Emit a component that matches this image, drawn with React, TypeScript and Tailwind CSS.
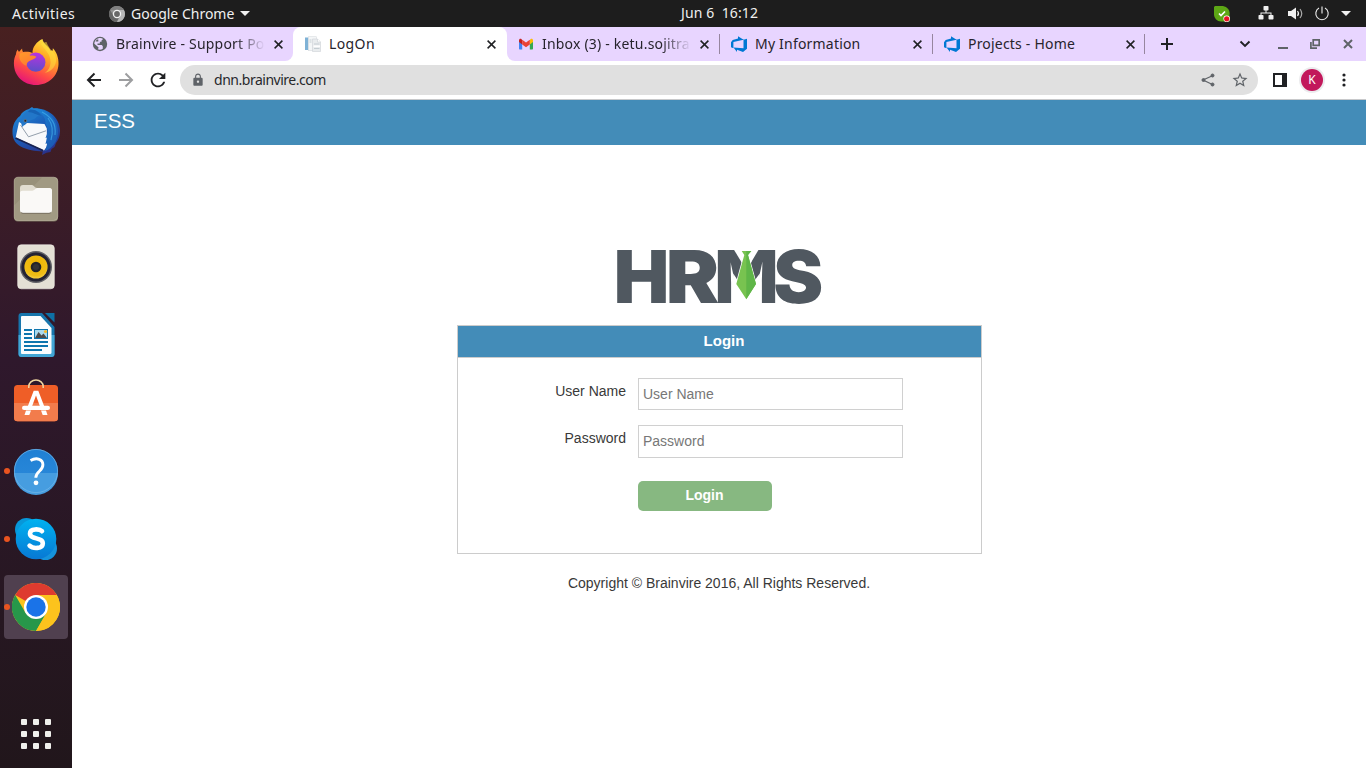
import type { ReactNode } from "react";
import { MdRefresh, MdLock, MdStarBorder } from "react-icons/md";

const Firefox = () => (
  <svg viewBox="0 0 48 48" className="size-12">
    <defs>
      <linearGradient id="ff1" x1="0.8" y1="0" x2="0.3" y2="1">
        <stop offset="0" stopColor="#fff044" />
        <stop offset="0.35" stopColor="#ffa726" />
        <stop offset="0.7" stopColor="#ff4b45" />
        <stop offset="1" stopColor="#e3127c" />
      </linearGradient>
      <linearGradient id="ff2" x1="0.5" y1="0" x2="0.4" y2="1">
        <stop offset="0" stopColor="#b833e1" />
        <stop offset="1" stopColor="#5b4fc8" />
      </linearGradient>
      <linearGradient id="ff3" x1="0" y1="0" x2="0.6" y2="1">
        <stop offset="0" stopColor="#ff9a2a" />
        <stop offset="1" stopColor="#ff7a30" />
      </linearGradient>
    </defs>
    <path d="M30.500 0c.6 4 3.600 5.500 6.500 9 .8 1 1.300 1.900 1.600 2.700 1-.2 1.700-.1 2.200.1-.2-1.200 0-2 .1-2.600 3.700 4 5.900 9.600 5.600 15.800C46.200 37 36.500 46 24 46S2 37 1.900 24.500c0-3.600.7-6.600 2.100-9.200 0-2 .8-3.800 1.900-4.900.2 1.200.6 1.800 1.200 2.400 1-1.400 2.300-2.600 3-3.400 0 1.600.3 2.700 1.200 3.700C15 12.500 18 13 20.500 14c-.3-5.500 4-11.500 10-14z" fill="url(#ff1)" />
    <circle cx="23.800" cy="23.200" r="9.600" fill="url(#ff2)" />
    <path d="M8 14.500c4-1.300 8 .2 10.500 2.300 1.500-.4 4-.2 5.900.9-1.400 2.300-4.600 3-6.500 4.100-1.800 1-3.500 2.200-3.400 5C9 25 6 19 8 14.500z" fill="url(#ff3)" />
    <path d="M29 5c3.500 6 9.500 9 9.500 18 0 5-2.500 9-6 11 7-1.500 12.500-7 11.500-15-1-6-5-7-7-11-1.400-2-2-4-2.500-5-2 .2-4 1-5.500 2z" fill="#ffe23f" opacity=".55" />
  </svg>
);

const Thunderbird = () => (
  <svg viewBox="0 0 48 48" className="size-12">
    <defs>
      <linearGradient id="tb1" x1="0.1" y1="0" x2="0.7" y2="1">
        <stop offset="0" stopColor="#2390dd" />
        <stop offset="0.5" stopColor="#1a5cb8" />
        <stop offset="1" stopColor="#2b2f88" />
      </linearGradient>
      <linearGradient id="tb2" x1="0" y1="0" x2="1" y2="1">
        <stop offset="0" stopColor="#1d8bdc" />
        <stop offset="1" stopColor="#1b52ad" />
      </linearGradient>
    </defs>
    <path d="M17 2L20 0l1.500 1.200C35 .5 47.500 9.500 48 23c.2 6-1.500 10-4 13l-1.500 4-3 2-1 3-4 .8-4.500 2.200.8-3.500C15 43.500 3 40 .8 29-.5 20 2.500 13 8 9c2-4 5-6 9-7z" fill="url(#tb1)" />
    <path d="M7 15l5.500 3.200L15 16l17.500 1 2.300 4.500.2 18-3 4L3.700 30.500z" fill="#f8f9fb" />
    <path d="M8.500 18l8 11.800 17.500-6" fill="none" stroke="#8794a3" strokeWidth=".9" />
    <path d="M3.500 31l27.500 12.500" stroke="#182351" strokeWidth="1.800" />
    <path d="M17 2.500C29 3 34 10 33.500 17c2.500 4 2.500 7 1.500 10l-1.500 4 1.500-.5-1.500 6.500 1.800-.8-2.300 7.800c7-2.500 12.500-9 13-18C46.500 14 37 3 24 1.500z" fill="url(#tb2)" />
    <path d="M36 11c4.500 6 5.500 13 3 22M30 5c9 5 14.500 11 13 23" fill="none" stroke="#45b2ee" strokeWidth="1.200" opacity=".65" />
    <path d="M10.500 20C8 16 9 7 17 3c6-1 11 2 13 6-5-2-5 2-9 3.500-5 1.500-7 3-10.500 7.500z" fill="#2277c9" />
    <path d="M16 5c5 0 8 3 14 4-3-4-7-7-12-6.500z" fill="#1763b5" />
    <circle cx="13.300" cy="13.800" r="1.300" fill="#1b2433" stroke="#9b8d73" strokeWidth=".5" />
  </svg>
);

const Files = () => (
  <svg viewBox="0 0 48 48" className="size-12">
    <rect x="2" y="2.500" width="44" height="44" rx="4" fill="#79705d" />
    <rect x="2.200" y="2.200" width="43.600" height="43.300" rx="4" fill="#a19a83" stroke="#c9c3ae" strokeWidth=".5" />
    <path d="M2.500 30L30 2.500H6a3.500 3.500 0 00-3.500 3.500z" fill="#8f8872" opacity=".5" />
    <path d="M8 13c0-2 1-3 3-3h9c2 0 2.500 3 5 3h12c2 0 3 1 3 3v10H8z" fill="#e1ddd0" />
    <path d="M8 18c0-1.500 1-2.200 2.500-2.200h9.800c2 0 3-2.800 5-2.800h12.200c1.500 0 2.500 1 2.500 2.500v19.500c0 2-1 3-3 3H11c-2 0-3-1-3-3z" fill="#faf9f7" />
    <path d="M9 37.500c.5.500 1.200.8 2 .8h26c.8 0 1.500-.3 2-.8" fill="none" stroke="#6d6657" strokeWidth=".8" />
  </svg>
);

const Rhythmbox = () => (
  <svg viewBox="0 0 48 48" className="size-12">
    <defs>
      <radialGradient id="rb" cx=".5" cy=".35" r=".8">
        <stop offset="0" stopColor="#f0b400" />
        <stop offset=".65" stopColor="#efbd16" />
        <stop offset="1" stopColor="#ffe37a" />
      </radialGradient>
    </defs>
    <rect x="5.700" y="1.800" width="36.600" height="44" rx="3.500" fill="#e4e0d5" stroke="#f5f3ec" strokeWidth=".6" />
    <circle cx="24" cy="24" r="16" fill="#606066" />
    <circle cx="24" cy="24" r="14.600" fill="#242333" />
    <circle cx="24" cy="24" r="11.600" fill="url(#rb)" />
    <circle cx="24" cy="24" r="5.300" fill="#242428" />
    <circle cx="24" cy="24" r="3" fill="#333336" />
  </svg>
);

const Writer = () => (
  <svg viewBox="0 0 48 48" className="size-12">
    <path d="M9.500 2H30l12.500 14v27a3 3 0 01-3 3h-30a3 3 0 01-3-3V5a3 3 0 013-3z" fill="#1675ac" />
    <path d="M6.500 24h36v19a3 3 0 01-3 3h-30a3 3 0 01-3-3z" fill="#42a6d5" />
    <path d="M33 2h9.500v9.500z" fill="#0e70a5" />
    <path d="M10 5h18.500L39.500 17v24.500a1.500 1.500 0 01-1.500 1.500H10a1 1 0 01-1-1V6a1 1 0 011-1z" fill="#fbfdfe" />
    <path d="M12 19h8M12 23h8M12 27h8M12 31h24M12 35h24M12 39h18" stroke="#0c75ae" strokeWidth="1.900" />
    <rect x="22.500" y="18.500" width="13" height="9" fill="#a9daee" stroke="#0c75ae" />
    <path d="M23 27l3.500-6 3 3.500 2-2 3.500 4.500z" fill="#4b4b4b" />
    <circle cx="33.500" cy="20.500" r="1.600" fill="#f5b829" />
  </svg>
);

const Software = () => (
  <svg viewBox="0 0 48 48" className="size-12">
    <rect x="2" y="6" width="44" height="36.300" rx="3.500" fill="#ef5e27" />
    <path d="M2 24h44v14.800a3.500 3.500 0 01-3.500 3.500h-37A3.500 3.500 0 012 38.800z" fill="#f27c4c" />
    <path d="M16.800 9V7.500a7.200 6.500 0 0114.400 0V9" fill="none" stroke="#f1d8a2" strokeWidth="1.500" />
    <path d="M21.700 11.800h4.600L32.500 28h-4.300L24 16.500 19.800 28h-4.300z" fill="#fff" />
    <path d="M14 31.500h5L17.300 36H12.500zM29 31.500h5l1.500 4.500h-4.800z" fill="#fff" />
    <rect x="10" y="26.800" width="28" height="4.300" rx="2.100" fill="#fff" />
  </svg>
);

const Help = () => (
  <svg viewBox="0 0 48 48" className="size-12">
    <defs>
      <linearGradient id="hp" x1="0" y1="0" x2="0" y2="1"><stop offset="0" stopColor="#2080d4" /><stop offset="1" stopColor="#2d8bdb" /></linearGradient>
    </defs>
    <circle cx="24" cy="24" r="22" fill="url(#hp)" />
    <path d="M2 26a22 22 0 0044 0z" fill="#469de0" />
    <circle cx="24" cy="24" r="21.600" fill="none" stroke="#74b7e8" strokeWidth=".7" />
    <path d="M18.500 13.500c6.500-3.600 12.400-1 12.400 4.200 0 6.500-7.100 6.500-7.100 13" fill="none" stroke="#fff" strokeWidth="2.900" />
    <circle cx="24" cy="35.800" r="2.400" fill="#fff" />
  </svg>
);

const Skype = () => (
  <svg viewBox="0 0 48 48" className="size-12">
    <defs>
      <linearGradient id="sk" x1="0" y1="0" x2="0" y2="1">
        <stop offset="0" stopColor="#00b2f0" />
        <stop offset="1" stopColor="#0878d4" />
      </linearGradient>
    </defs>
    <circle cx="14.500" cy="14.500" r="11.500" fill="#0797d9" />
    <circle cx="33.500" cy="33.500" r="11.500" fill="#1593dc" />
    <circle cx="24" cy="24" r="20.300" fill="url(#sk)" />
    <path d="M30 16.200c-2.300-2.400-12-3-12 2.200 0 6.500 12.800 3.500 12.800 10 0 5.700-10 5.500-13.200 2.200" fill="none" stroke="#fff" strokeWidth="4.600" strokeLinecap="round" />
  </svg>
);

const Chrome = () => (
  <svg viewBox="0 0 48 48" className="size-12">
    <circle cx="24" cy="24" r="24" fill="#fcc31d" />
    <path d="M24 24L3.200 12A24 24 0 0144.800 12z" fill="#de3b2f" />
    <path d="M3.200 12l10.400 18h20.800L24 48A24 24 0 013.200 12z" fill="#27974a" />
    <path d="M34.400 30L24 48a24 24 0 0020.800-36H24z" fill="#fcc31d" />
    <circle cx="24" cy="24" r="12" fill="#fff" />
    <circle cx="24" cy="24" r="9.700" fill="#1a73e8" />
  </svg>
);

const GreyChrome = () => (
  <svg viewBox="0 0 16 16" className="size-4">
    <circle cx="8" cy="8" r="8" fill="#919191" />
    <path d="M1.100 4A8 8 0 0114.900 4H8z" fill="#808080" />
    <path d="M1.100 4l3.500 6 4.900 2L8 16A8 8 0 011.100 4z" fill="#666" />
    <path d="M8 4h6.900A8 8 0 018 16l3.400-6z" fill="#b5b5b5" />
    <circle cx="8" cy="8" r="4.200" fill="#f2f2f2" />
    <circle cx="8" cy="8" r="2.900" fill="#686868" />
  </svg>
);

const Globe = () => (
  <svg viewBox="0 0 16 16" className="size-4">
    <circle cx="8" cy="8" r="7.200" fill="#5f6368" />
    <path d="M6.500 2.300c1.700-.5 3.300-.2 4.600.6L9.500 4.500v1.300H7.800v1.700H5.500V9h4.300l1 1.200v2.500c-1.500 1.200-3.600 1.300-5 .6l.9-1.500L5 10 2.300 7.800c0-2.600 1.800-4.900 4.200-5.500z" fill="#e8d5ff" />
    <path d="M3.500 5.500h2.800V3.600L4.800 3.500zM8 6.800h2.500v1H8z" fill="#5f6368" />
  </svg>
);

const LogOnIcon = () => (
  <svg viewBox="0 0 16 16" className="size-4">
    <rect x="0" y="1.500" width="3.500" height="12.500" fill="#7fb2d6" />
    <rect x="3.500" y=".7" width="8" height="14" fill="#f4f6f7" stroke="#d8dde0" strokeWidth=".6" />
    <path d="M7.500 3h5L15.500 6v9.500h-8z" fill="#e9ecee" stroke="#ccd2d6" strokeWidth=".6" />
    <path d="M12.500 3v3h3" fill="#fff" stroke="#c3cace" strokeWidth=".5" />
    <path d="M9 8h5.500M9 12.500h5.500M4.500 4h2M4.500 6h2" stroke="#c0c9ce" strokeWidth=".9" />
    <path d="M8.500 10.200h6.500" stroke="#fff" strokeWidth="1.500" />
  </svg>
);

const Gmail = () => (
  <svg viewBox="0 0 16 16" className="size-4">
    <path d="M1 4v8.500c0 .6.400 1 1 1h2.200V7z" fill="#4285f4" />
    <path d="M15 4v8.500c0 .6-.4 1-1 1h-2.200V7z" fill="#34a853" />
    <path d="M1 4.200V6l3.200 2.500V4.200L3.400 3C2.300 2.200 1 3 1 4.200z" fill="#c5221f" />
    <path d="M15 4.200V6l-3.200 2.500V4.200l.8-1.200c1.100-.8 2.400 0 2.400 1.200z" fill="#fbbc04" />
    <path d="M4.200 3.700L8 6.600l3.800-2.900v4.700L8 11.300 4.200 8.400z" fill="#ea4335" />
  </svg>
);

const DevOps = () => (
  <svg viewBox="0 0 16 16" className="size-4">
    <path d="M16 2.800v10L12 16l-6-2.200V16l-3.500-4.500 10 .8V3.700zM12.600 3.800L7 .2v2.300L1.700 4.100 0 6.200v5l2.400 1V6z" fill="#0078d4" />
  </svg>
);

const HrmsLogo = () => (
  <svg viewBox="0 0 206 56" className="h-14 w-[206px] overflow-visible" role="img" aria-label="HRMS">
    <g fill="#505860" fontFamily="Inter, 'Liberation Sans', sans-serif" fontWeight="900" fontSize="73">
      <text x="-2.300" y="54" textLength="55.500" lengthAdjust="spacingAndGlyphs">H</text>
      <text x="49.800" y="54" textLength="53.500" lengthAdjust="spacingAndGlyphs">R</text>
      <text x="98.700" y="54" textLength="63.500" lengthAdjust="spacingAndGlyphs">M</text>
      <text x="157.200" y="54" textLength="50" lengthAdjust="spacingAndGlyphs">S</text>
    </g>
    <path d="M117.500 0L126 14l4 5 4.700-5L143 0z" fill="#fff" />
    <path d="M117.200 56V24.500l3.300 5L130 46l10-16.500 3.800-5V56z" fill="#fff" />
    <path d="M125.700 2h9.600l-3.300 4 8 29-9.700 15.300L120.300 35l8-29z" fill="#fff" stroke="#fff" strokeWidth="1.500" />
    <path d="M125.700 2h9.600L132 6l8 29-9.700 15.300L120.300 35l8-29z" fill="#78c350" />
    <path d="M135.300 2h-5v48.300L140 35l-8-29z" fill="#5fb648" />
  </svg>
);

const dockItems: { name: string; icon: ReactNode; running?: boolean; active?: boolean }[] = [
  { name: "Firefox", icon: <Firefox /> },
  { name: "Thunderbird", icon: <Thunderbird /> },
  { name: "Files", icon: <Files /> },
  { name: "Rhythmbox", icon: <Rhythmbox /> },
  { name: "Writer", icon: <Writer /> },
  { name: "Software", icon: <Software /> },
  { name: "Help", icon: <Help />, running: true },
  { name: "Skype", icon: <Skype />, running: true },
  { name: "Chrome", icon: <Chrome />, running: true, active: true },
];

function TopBar() {
  return (
    <header className="grid h-[27px] shrink-0 grid-cols-[681px_1fr_auto] items-center bg-[#1d1d1d] text-[14px] leading-[27px] whitespace-pre text-[#f0f0f0]">
      <div className="flex h-[27px] items-center">
        <span className="w-[97px] pl-3 tracking-[0.5px]">Activities</span>
        <span className="mr-1.5 ml-3"><GreyChrome /></span>
        <span className="w-[104px]">Google Chrome</span>
        <svg viewBox="0 0 10 5" className="ml-[5px] h-[5px] w-2.5"><path d="M0 0h10L5 5z" fill="#f0f0f0" /></svg>
      </div>
      <span className="pb-0.5 leading-[25px] tracking-[0.1px]">Jun 6  16:12</span>
      <div className="flex items-center justify-end pr-[15px]">
        <svg viewBox="0 0 16 16" className="mr-7 size-4">
          <path d="M1 0h8a7.500 7.500 0 016.500 9v6.500H7A7 7 0 010 8V1z" fill="#5da715" />
          <path d="M5 7.500l2 2 4-4" fill="none" stroke="#fff" strokeWidth="1.700" />
          <circle cx="12.700" cy="12.800" r="3.300" fill="#fff" /><circle cx="12.700" cy="12.800" r="2.600" fill="#e81123" />
        </svg>
        <svg viewBox="0 0 16 16" className="mr-[13px] size-4" fill="#f0f0f0">
          <rect x="5.500" y="0" width="5" height="4.500" rx=".8" /><rect x=".5" y="9" width="5" height="4.500" rx=".8" /><rect x="10.500" y="9" width="5" height="4.500" rx=".8" />
          <path d="M7.500 4h1v2.500h5V9h-1V7.500h-9V9h-1V6.500h5z" />
        </svg>
        <svg viewBox="0 0 16 16" className="mr-[11px] size-4">
          <path d="M1 5h3L9 1.500v12L4 10H1z" fill="#f0f0f0" />
          <path d="M10.500 5q2 2.500 0 5" fill="none" stroke="#f0f0f0" strokeWidth="1.200" />
          <path d="M13 3q3.500 4.500 0 9" fill="none" stroke="#aaa" strokeWidth="1.200" />
        </svg>
        <svg viewBox="0 0 16 16" className="mr-[11px] size-4" fill="none" stroke="#f0f0f0" strokeWidth="1.100">
          <path d="M5 2.100a6.200 6.200 0 106 0M8 .5v7" />
        </svg>
        <svg viewBox="0 0 10 5" className="h-[5px] w-2.5"><path d="M0 0h10L5 5z" fill="#f0f0f0" /></svg>
      </div>
    </header>
  );
}

function Dock() {
  return (
    <nav className="flex w-18 shrink-0 flex-col items-center bg-linear-to-b from-[#482020] via-[#2f182c] via-45% to-[#21161b] pt-1">
      <div className="flex flex-col gap-1">
        {dockItems.map((item) => (
          <div key={item.name} className={item.active ? "relative flex size-16 items-center justify-center rounded bg-[#50404f]" : "relative flex size-16 items-center justify-center"}>
            {item.running && <span className="absolute left-0 size-1.5 rounded-full bg-[#e95420]" />}
            {item.icon}
          </div>
        ))}
      </div>
      <div className="mt-auto mb-[19px] grid grid-cols-3 gap-1.5">
        {Array.from({ length: 9 }, (_, i) => <span key={i} className="size-1.5 rounded-[1px] bg-[#f0f0ec]" />)}
      </div>
    </nav>
  );
}

function Tab({ icon, title, fade, className }: { icon: ReactNode; title: string; fade?: boolean; className: string }) {
  return (
    <div className={"flex h-[34px] shrink-0 items-center text-[14px] text-[#27242c] " + className}>
      {icon}
      <span className={"ml-2 w-[149px] overflow-hidden pb-0.5 whitespace-nowrap " + (fade ? "[mask-image:linear-gradient(to_right,black_80%,transparent)]" : "")}>{title}</span>
      <svg viewBox="0 0 9 9" className="ml-[8.500px] size-[9px]" stroke="#202124" strokeWidth="1.500"><path d="M.6.6l7.800 7.800M8.400.6L.6 8.400" /></svg>
    </div>
  );
}

function TabStrip() {
  return (
    <div className="flex h-[34px] shrink-0 bg-white">
      <div className="w-[221px] rounded-br-lg bg-[#e8d5ff] pl-5">
        <Tab title="Brainvire - Support Po" fade className="tracking-[0.2px]" icon={<Globe />} />
      </div>
      <div className="w-[214px] bg-linear-to-b from-[#e8d5ff] from-50% to-white to-50%">
        <Tab title="LogOn" className="rounded-t-lg bg-white pl-3 tracking-[0.4px]" icon={<LogOnIcon />} />
      </div>
      <div className="flex flex-1 items-center rounded-bl-lg bg-[#e8d5ff] pl-[11px]">
        <Tab title="Inbox (3) - ketu.sojitra" fade className="w-[201px] tracking-[0.2px]" icon={<Gmail />} />
        <span className="h-5 w-px bg-[#97869f]" />
        <Tab title="My Information" className="w-[212px] pl-[11px] tracking-[0.2px]" icon={<DevOps />} />
        <span className="h-5 w-px bg-[#97869f]" />
        <Tab title="Projects - Home" className="w-[211px] pl-[11px] tracking-[0.2px]" icon={<DevOps />} />
        <span className="h-5 w-px bg-[#97869f]" />
        <svg viewBox="0 0 12 12" className="ml-4 size-3" stroke="#202124" strokeWidth="2"><path d="M6 0v12M0 6h12" /></svg>
        <svg viewBox="0 0 12 8" className="ml-[66px] h-2 w-3" fill="none" stroke="#202124" strokeWidth="1.900"><path d="M1.500 1.500L6 6l4.500-4.500" /></svg>
        <svg viewBox="0 0 10 10" className="ml-[27px] size-2.5"><path d="M0 9h10" stroke="#5f6368" strokeWidth="2" /></svg>
        <svg viewBox="0 0 10 10" className="ml-[22px] size-2.5" fill="none" stroke="#5f6368" strokeWidth="1.700"><path d="M3.200.9h6v5.500h-6zM.9 3v6.200H7" /></svg>
        <svg viewBox="0 0 10 10" className="ml-[23px] size-2.5" stroke="#5f6368" strokeWidth="2"><path d="M1 1l8 8M9 1L1 9" /></svg>
      </div>
    </div>
  );
}

function Toolbar() {
  return (
    <div className="flex h-[39px] shrink-0 items-center border-b border-[#c8c9cb] bg-white pl-3">
      <svg viewBox="0 0 20 20" className="size-5" fill="none" stroke="#202124" strokeWidth="2"><path d="M17 10H4.500M10.500 3.500L4 10l6.500 6.500" /></svg>
      <svg viewBox="0 0 20 20" className="ml-3 size-5" fill="none" stroke="#9d9ea0" strokeWidth="2"><path d="M3 10h12.500M9.500 3.500L16 10l-6.500 6.500" /></svg>
      <MdRefresh className="ml-[11px] size-[22px] text-[#202124]" />
      <div className="ml-[11px] flex h-[30px] w-[1078px] items-center rounded-full bg-[#e0e0e0] pl-[11px] text-[14px] text-[#27282b]">
        <MdLock className="size-3.5 text-[#5f6368]" />
        <span className="ml-[9px] pb-0.5 tracking-[-0.48px]">dnn.brainvire.com</span>
        <svg viewBox="0 0 14 14" className="ml-auto size-3.5" fill="#5f6368" stroke="#5f6368"><path d="M12 2.500L2 7l10 4.700" fill="none" strokeWidth="1.200" /><circle cx="11.500" cy="2.500" r="1.500" /><circle cx="2.500" cy="7" r="1.500" /><circle cx="11.500" cy="11.500" r="1.500" /></svg>
        <MdStarBorder className="mr-[9px] ml-4 size-[18px] text-[#5f6368]" />
      </div>
      <svg viewBox="0 0 14 14" className="ml-[15px] size-3.5"><path d="M0 0h14v14H0z" fill="#202124" /><path d="M2 2h7v10H2z" fill="#fff" /></svg>
      <span className="ml-3 flex size-[26px] items-center justify-center rounded-full bg-[#ececee]">
        <span className="flex size-[22px] items-center justify-center rounded-full bg-[#c2185b] text-[12px] text-white">K</span>
      </span>
      <svg viewBox="0 0 4 14" className="ml-[17px] h-3.5 w-1" fill="#202124"><circle cx="2" cy="2" r="1.600" /><circle cx="2" cy="7" r="1.600" /><circle cx="2" cy="12" r="1.600" /></svg>
    </div>
  );
}

function LoginPage() {
  return (
    <main className="flex flex-1 flex-col bg-white font-['Liberation_Sans',Arial,sans-serif] text-[14px] text-[#393939]">
      <div className="h-[45px] bg-[#438cb8] pl-[22px] text-[20.500px] leading-[42px] text-white">ESS</div>
      <div className="flex flex-col items-center pt-[104px]">
        <HrmsLogo />
        <section className="mt-5 h-[229px] w-[525px] border border-[#ccc]">
          <h1 className="h-8 border-b border-[#ccc] bg-[#438cb8] pl-2.5 text-center text-[15px] leading-[30px] font-bold text-white">Login</h1>
          <form className="grid grid-cols-[168.500px_265px] gap-x-[11.500px] pt-5">
            <label htmlFor="user" className="pt-[3px] text-right leading-5">User Name</label>
            <input id="user" placeholder="User Name" className="h-8 border border-[#d0d0d0] px-[4.500px] placeholder:text-[#777]" />
            <label htmlFor="pass" className="mt-[15px] pt-[3px] text-right leading-5">Password</label>
            <input id="pass" type="password" placeholder="Password" className="mt-[15px] h-[33px] border border-[#d0d0d0] px-[4.500px] pb-0.5 placeholder:text-[#777]" />
            <button type="button" className="col-start-2 mt-[23px] h-[30px] w-[134px] rounded-[5px] bg-[#87b881] pb-0.5 font-bold text-white">Login</button>
          </form>
        </section>
        <p className="mt-[19px] leading-5">Copyright © Brainvire 2016, All Rights Reserved.</p>
      </div>
    </main>
  );
}

export default function App() {
  return (
    <div className="flex h-[768px] w-[1366px] flex-col overflow-hidden font-['Noto_Sans','Open_Sans',sans-serif]">
      <TopBar />
      <div className="flex min-h-0 flex-1">
        <Dock />
        <div className="flex min-w-0 flex-1 flex-col">
          <TabStrip />
          <Toolbar />
          <LoginPage />
        </div>
      </div>
    </div>
  );
}
